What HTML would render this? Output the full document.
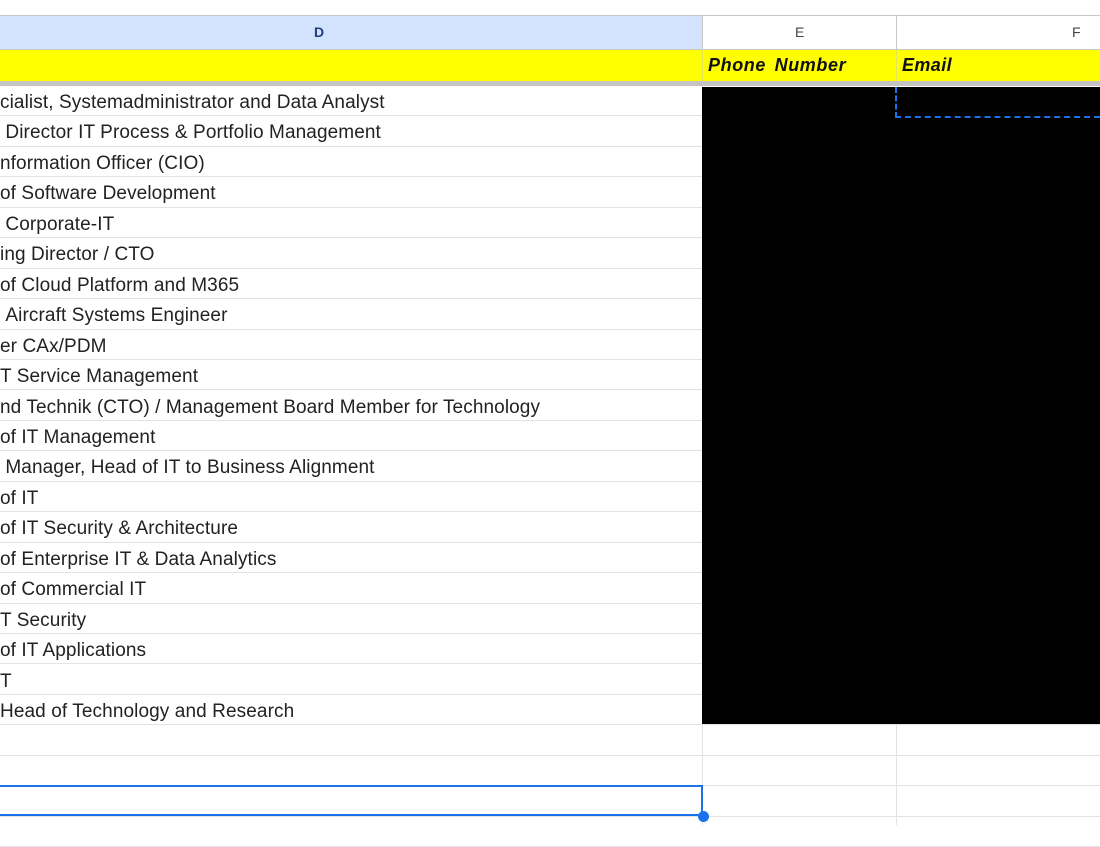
<!DOCTYPE html>
<html><head><style>
*{margin:0;padding:0;box-sizing:border-box}
body{width:1100px;height:825px;background:#fff;position:relative;overflow:hidden;font-family:"Liberation Sans",Arial,sans-serif}
.a{position:absolute}
.hd{top:15px;height:35px;border-top:1px solid #c7c7c7;border-bottom:1px solid #c7c7c7;color:#444;font-size:14px;line-height:33px}
.row{position:absolute;left:0;width:1100px;height:30.4px;border-bottom:1px solid #e2e2e2}
.t{position:absolute;left:0;top:2px;font-size:19px;letter-spacing:0.1px;color:#222;white-space:nowrap;line-height:30px}
</style></head><body>
<div class="a hd" style="left:0;width:702px;background:#d3e3fd;color:#1f3f7a;font-weight:bold"><span class="a" style="left:314px">D</span></div>
<div class="a hd" style="left:702px;width:195px;border-left:1px solid #c7c7c7"><span class="a" style="left:92px">E</span></div>
<div class="a hd" style="left:896px;width:204px;border-left:1px solid #c7c7c7"><span class="a" style="left:175px">F</span></div>
<div class="a" style="top:50px;left:0;width:1100px;height:31px;background:#ffff00"></div>
<div class="a" style="top:50px;left:702px;width:1px;height:31px;background:#e6e65a"></div>
<div class="a" style="top:50px;left:896px;width:1px;height:31px;background:#e6e65a"></div>
<div class="a" style="top:55px;left:708px;font-size:18px;font-weight:bold;font-style:italic;color:#111;letter-spacing:0.6px;word-spacing:3px">Phone Number</div>
<div class="a" style="top:55px;left:902px;font-size:18px;font-weight:bold;font-style:italic;color:#111;letter-spacing:0.4px">Email</div>
<div class="a" style="top:81px;left:0;width:1100px;height:5px;background:#c4c4c4"></div>
<div id="rows"></div>
<div class="a" style="top:724px;left:702px;width:1px;height:101px;background:#e2e2e2"></div>
<div class="a" style="top:724px;left:896px;width:1px;height:101px;background:#e2e2e2"></div>
<div class="a" style="top:87px;left:702px;width:398px;height:637px;background:#000"></div>
<div class="a" style="top:87px;left:895px;width:205px;height:31px;border-left:2px dashed #1a73e8;border-bottom:2px dashed #1a73e8"></div>
<div class="a" style="top:785px;left:0;width:703px;height:31px;border:2px solid #1a73e8;border-left:none"></div>
<div class="a" style="top:811px;left:698px;width:11px;height:11px;border-radius:50%;background:#1a73e8"></div>
<script>
var t=["cialist, Systemadministrator and Data Analyst"," Director IT Process &amp; Portfolio Management","nformation Officer (CIO)","of Software Development"," Corporate-IT","ing Director / CTO","of Cloud Platform and M365"," Aircraft Systems Engineer","er CAx/PDM","T Service Management","nd Technik (CTO) / Management Board Member for Technology","of IT Management"," Manager, Head of IT to Business Alignment","of IT","of IT Security &amp; Architecture","of Enterprise IT &amp; Data Analytics","of Commercial IT","T Security","of IT Applications","T","Head of Technology and Research","","","",""];
var h="";for(var i=0;i<t.length;i++){var y=86+i*30.45;h+='<div class="row" style="top:'+y+'px"><div class="t">'+t[i].replace(/^ /,'&nbsp;')+'</div></div>';}
document.getElementById("rows").innerHTML=h;
</script>
</body></html>
